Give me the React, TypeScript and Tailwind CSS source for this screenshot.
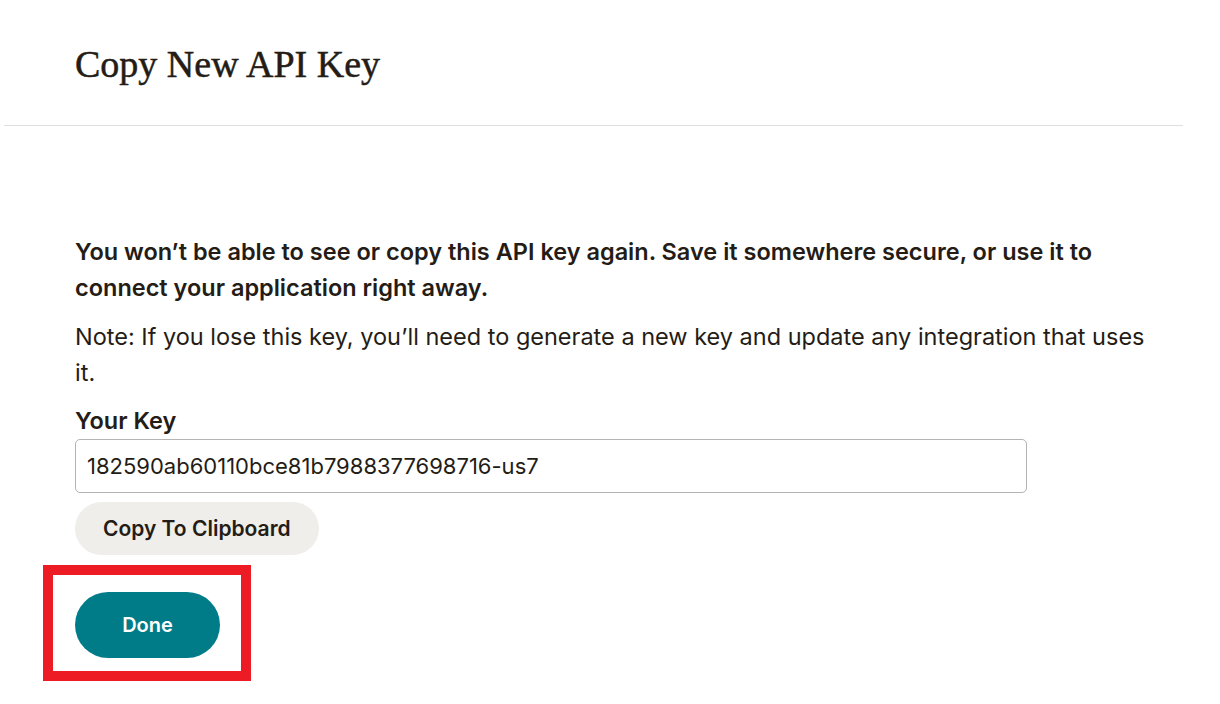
import React from "react";

const ink = "text-[#241c15]";

export default function App() {
  return (
    <div className="relative min-h-[704px] w-[1220px] bg-white font-['Inter','Liberation_Sans',sans-serif]">
      {/* Header */}
      <div className="ml-[4px] w-[1179px] h-[126px] border-b border-[#e0dfdd] pl-[71px] pt-[40px]">
        <h1
          className={`font-['Liberation_Serif',Georgia,serif] text-[38px] leading-[48px] [-webkit-text-stroke:0.5px_#241c15] ${ink}`}
        >
          Copy New API Key
        </h1>
      </div>

      {/* Body */}
      <div className="pl-[75px] pt-[108px] w-[1165px]">
        <p className={`font-semibold text-[23.5px] leading-[36px] ${ink}`}>
          You won’t be able to see or copy this API key again. Save it somewhere secure, or use it to connect your
          application right away.
        </p>
        <p className={`mt-[13px] text-[23.5px] leading-[36px] ${ink}`}>
          Note: If you lose this key, you’ll need to generate a new key and update any integration that uses it.
        </p>

        <label className={`mt-[12px] block font-semibold text-[23.5px] leading-[36px] ${ink}`}>Your Key</label>
        <input
          readOnly
          value="182590ab60110bce81b7988377698716-us7"
          className={`block w-[952px] h-[54px] rounded-[5px] border border-[#b5b4b2] px-[11px] text-[22px] ${ink} outline-none`}
        />

        <button className={`mt-[9px] h-[53px] rounded-full bg-[#efeeea] px-[28px] font-semibold text-[21px] ${ink}`}>
          Copy To Clipboard
        </button>

        <div className="mt-[37px]">
          <button className="h-[66px] w-[145px] rounded-full bg-[#007c89] font-semibold text-[20px] text-white">Done</button>
        </div>
      </div>

      {/* Annotation highlight */}
      <div className="pointer-events-none absolute left-[43px] top-[565px] h-[116px] w-[208px] border-[10px] border-[#ed1c24]" />
    </div>
  );
}
